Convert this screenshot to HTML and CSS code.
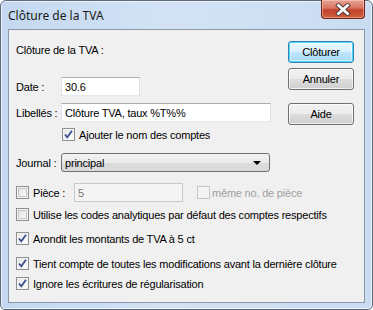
FILE: index.html
```html
<!DOCTYPE html>
<html lang="fr">
<head>
<meta charset="utf-8">
<title>Clôture de la TVA</title>
<link rel="stylesheet" href="styles.css">
</head>
<body>
<div class="window">
  <div class="titlebar">
    <span class="title">Clôture de la TVA</span>
    <span class="close">
      <svg width="16" height="13" viewBox="0 0 16 13"><path d="M3.5 2.5 L12.5 10.5 M12.5 2.5 L3.5 10.5" stroke="#4d3434" stroke-width="4.6" stroke-linecap="square" fill="none"/><path d="M3.5 2.5 L12.5 10.5 M12.5 2.5 L3.5 10.5" stroke="#fff" stroke-width="2.8" stroke-linecap="square" fill="none"/></svg>
    </span>
  </div>
  <div class="client">
    <div class="top">
      <div class="form">
        <div class="row r-head">Clôture de la TVA :</div>
        <div class="row r-date">
          <span class="label">Date :</span>
          <span class="input w-date">30.6</span>
        </div>
        <div class="row r-lib">
          <span class="label">Libellés :</span>
          <span class="input w-lib">Clôture TVA, taux %T%%</span>
        </div>
        <div class="row r-ajout">
          <span class="cb on"><svg width="11" height="11" viewBox="0 0 11 11"><path d="M2 5.5 L4.3 8.3 L9 1.8" fill="none" stroke="#3b4f8c" stroke-width="1.8"/></svg></span>
          <span>Ajouter le nom des comptes</span>
        </div>
        <div class="row r-journal">
          <span class="label">Journal :</span>
          <span class="select">principal<span class="arrow"></span></span>
        </div>
      </div>
      <div class="buttons">
        <span class="btn default">Clôturer</span>
        <span class="btn b-annuler">Annuler</span>
        <span class="btn b-aide">Aide</span>
      </div>
    </div>
    <div class="bottom">
      <div class="row r-piece">
        <span class="cb"></span>
        <span class="piece-label">Pièce :</span>
        <span class="input disabled w-piece">5</span>
        <span class="cb dis"></span>
        <span class="gray">même no. de pièce</span>
      </div>
      <div class="row r-util">
        <span class="cb"></span>
        <span>Utilise les codes analytiques par défaut des comptes respectifs</span>
      </div>
      <div class="row r-arr">
        <span class="cb on"><svg width="11" height="11" viewBox="0 0 11 11"><path d="M2 5.5 L4.3 8.3 L9 1.8" fill="none" stroke="#3b4f8c" stroke-width="1.8"/></svg></span>
        <span>Arondit les montants de TVA à 5 ct</span>
      </div>
      <div class="row r-tient">
        <span class="cb on"><svg width="11" height="11" viewBox="0 0 11 11"><path d="M2 5.5 L4.3 8.3 L9 1.8" fill="none" stroke="#3b4f8c" stroke-width="1.8"/></svg></span>
        <span>Tient compte de toutes les modifications avant la dernière clôture</span>
      </div>
      <div class="row r-ign">
        <span class="cb on"><svg width="11" height="11" viewBox="0 0 11 11"><path d="M2 5.5 L4.3 8.3 L9 1.8" fill="none" stroke="#3b4f8c" stroke-width="1.8"/></svg></span>
        <span>Ignore les écritures de régularisation</span>
      </div>
    </div>
  </div>
</div>
</body>
</html>
```

FILE: styles.css
```css
* { box-sizing: border-box; }
html, body { margin: 0; padding: 0; background: #fff; }
body { width: 373px; height: 310px; overflow: hidden; }

.window {
  width: 373px;
  height: 310px;
  border: 1px solid #5d6b7c;
  border-radius: 6px 6px 5px 5px;
  background: linear-gradient(90deg, #c3d8f0 0%, #d3e3f5 45%, #cadcf1 100%);
  display: flex;
  flex-direction: column;
  font-family: "Liberation Sans", Arial, sans-serif;
  font-size: 11px;
  letter-spacing: -0.2px;
  color: #000;
  box-shadow: inset 0 0 0 1px rgba(255,255,255,0.6);
}

.titlebar {
  height: 28px;
  display: flex;
  align-items: flex-start;
  justify-content: space-between;
  padding: 0 7px 0 7px;
  flex: none;
}
.title {
  font-family: "Noto Sans", "Open Sans", sans-serif;
  font-size: 12px;
  letter-spacing: 0;
  margin-top: 6px;
  color: #1a1a1a;
}
.close {
  width: 44px;
  height: 19px;
  margin-top: -1px;
  border: 1px solid #6e2219;
  border-top: none;
  border-radius: 0 0 4px 4px;
  background: linear-gradient(#e9a493 0%, #d7735f 45%, #c2432b 55%, #cf5e3e 100%);
  box-shadow: inset 0 0 0 1px rgba(255,220,210,0.45);
  display: flex;
  align-items: center;
  justify-content: center;
}

.client {
  margin: 0 7px 6px 7px;
  flex: 1;
  border: 1px solid #8a98aa;
  background: #f0f0f0;
  display: flex;
  flex-direction: column;
  padding-left: 7px;
}

.top { display: flex; }
.form { flex: 1; padding-top: 12px; }

.row { display: flex; align-items: center; white-space: nowrap; }
.r-head { height: 16px; }
.r-date { margin-top: 19px; height: 19px; }
.r-lib { margin-top: 7px; height: 19px; }
.r-ajout { margin-top: 6px; height: 13px; padding-left: 46px; }
.r-journal { margin-top: 12px; height: 19px; }
.r-piece { margin-top: 11px; height: 19px; }
.r-util { margin-top: 6px; height: 13px; }
.r-arr { margin-top: 11px; height: 13px; }
.r-tient { margin-top: 12px; height: 13px; }
.r-ign { margin-top: 7px; height: 13px; }

.label { width: 45px; flex: none; }

.input {
  height: 19px;
  background: #fff;
  border: 1px solid #abadb3;
  border-left-color: #e2e3ea;
  border-right-color: #dbdfe6;
  border-bottom-color: #e3e9ef;
  display: flex;
  align-items: center;
  padding-left: 3px;
}
.w-date { width: 79px; }
.w-lib { width: 210px; }
.w-piece { width: 109px; margin-left: 5px; margin-right: 14px; }
.input.disabled {
  background: #f4f4f4;
  color: #7a7a7a;
  border-color: #c7c9cd;
}

.select {
  width: 209px;
  height: 19px;
  border: 1px solid #707070;
  border-radius: 3px;
  background: linear-gradient(#f2f2f2 0%, #ebebeb 50%, #dddddd 51%, #d8d8d8 100%);
  display: flex;
  align-items: center;
  padding-left: 3px;
  position: relative;
}
.arrow {
  position: absolute;
  right: 8px;
  top: 7px;
  width: 0;
  height: 0;
  border-left: 4px solid transparent;
  border-right: 4px solid transparent;
  border-top: 4px solid #000;
}

.cb {
  width: 13px;
  height: 13px;
  flex: none;
  border: 1px solid #8e8f8f;
  background: linear-gradient(135deg, #dcdcdc 0%, #f5f5f5 70%, #ffffff 100%);
  box-shadow: inset 0 0 0 1px #f4f4f4, inset 0 0 0 2px #c8c8c8;
  margin-right: 4px;
  display: flex;
  align-items: center;
  justify-content: center;
}
.cb.on { box-shadow: inset 0 0 0 1px #f4f4f4; background: linear-gradient(135deg, #e4e4e4 0%, #fafafa 80%); }
.cb.dis { border-color: #c5c5c5; background: #f4f4f4; box-shadow: none; margin-right: 2px; }
.gray { color: #a0a0a0; }
.piece-label { width: 36px; }

.buttons {
  width: 66px;
  margin-right: 10px;
  padding-top: 11px;
  display: flex;
  flex-direction: column;
}
.btn {
  height: 22px;
  border: 1px solid #707070;
  border-radius: 3px;
  background: linear-gradient(#f2f2f2 0%, #ebebeb 50%, #dddddd 51%, #cfcfcf 100%);
  box-shadow: inset 0 0 0 1px rgba(255,255,255,0.7);
  display: flex;
  align-items: center;
  justify-content: center;
}
.btn.default {
  border-color: #3c7fb1;
  box-shadow: inset 0 0 0 1px #48d8fb, inset 0 0 0 2px rgba(255,255,255,0.5);
  background: linear-gradient(#eaf6fd 0%, #d9f0fc 50%, #bee6fd 51%, #a7d9f5 100%);
}
.b-annuler { margin-top: 5px; }
.b-aide { margin-top: 13px; }
```
